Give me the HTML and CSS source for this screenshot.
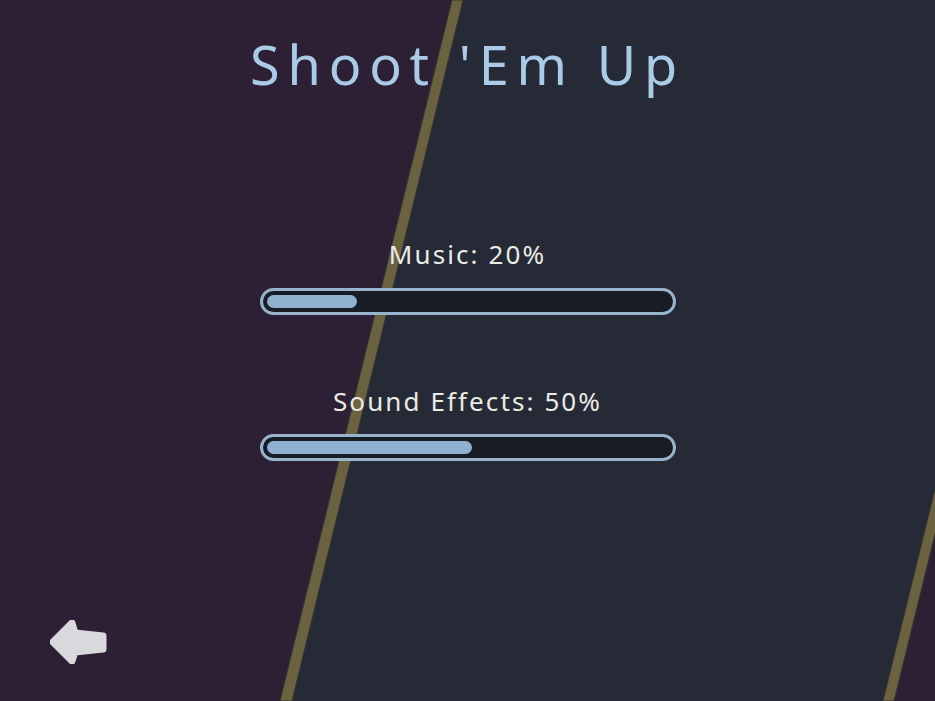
FILE: index.html
```
<!DOCTYPE html>
<html lang="en">
<head>
    <meta charset="UTF-8">
    <meta name="viewport" content="width=device-width, initial-scale=1.0">
    <title>Shoot 'Em Up - Options</title>
    <link rel="stylesheet" href="styles.css">
</head>
<body>
    <!-- Diagonal band backdrop -->
    <svg class="backdrop" viewBox="0 0 935 701" preserveAspectRatio="none">
        <rect width="935" height="701" fill="#2d2035"/>
        <polygon points="463,0 1055,0 883,701 292,701" fill="#252a36"/>
        <polygon points="452,0 463,0 292,701 280,701" fill="#6b6340" stroke="#3a3434" stroke-width="1"/>
        <polygon points="1055,0 1066,0 894,701 883,701" fill="#6b6340" stroke="#3a3434" stroke-width="1"/>
    </svg>

    <div class="container">
        <h1 class="title">Shoot 'Em Up</h1>

        <div class="setting">
            <div class="setting-label">Music: 20%</div>
            <div class="slider">
                <div class="slider-fill" style="width: 22.4%"></div>
            </div>
        </div>

        <div class="setting">
            <div class="setting-label">Sound Effects: 50%</div>
            <div class="slider">
                <div class="slider-fill" style="width: 51.2%"></div>
            </div>
        </div>
    </div>

    <!-- Back button -->
    <button class="back-button" aria-label="Back">
        <svg viewBox="0 0 58 44" width="58" height="44">
            <polygon points="3,22 22,3 25,13 53,16 53,29 25,32 22,41"
                     fill="#d9d8dc" stroke="#d9d8dc" stroke-width="7" stroke-linejoin="round"/>
        </svg>
    </button>
</body>
</html>
```

FILE: styles.css
```
/* Base styles */
body {
    margin: 0;
    padding: 0;
    width: 100vw;
    height: 100vh;
    overflow: hidden;
    font-family: 'Noto Sans', 'DejaVu Sans', sans-serif;
    color: #ebeae4;
    background-color: #2d2035;
    position: relative;
}

.backdrop {
    position: absolute;
    top: 0;
    left: 0;
    width: 100%;
    height: 100%;
    z-index: 0;
}

.container {
    position: relative;
    z-index: 1;
    display: flex;
    flex-direction: column;
    align-items: center;
}

/* Title */
.title {
    margin: 32px 0 0;
    font-size: 54px;
    font-weight: 400;
    letter-spacing: 7.8px;
    color: #a9cbe8;
    line-height: 1.2;
}

/* Volume settings */
.setting {
    display: flex;
    flex-direction: column;
    align-items: center;
    margin-top: 141px;
}

.setting + .setting {
    margin-top: 70px;
}

.setting-label {
    font-size: 26px;
    letter-spacing: 2.1px;
    line-height: 1.3;
    margin-bottom: 16px;
}

.slider {
    width: 416px;
    height: 27px;
    box-sizing: border-box;
    border: 3px solid #98b3cc;
    border-radius: 14px;
    background-color: #171c25;
    padding: 4px;
}

.slider-fill {
    height: 100%;
    border-radius: 7px;
    background-color: #8fb0cf;
}

/* Back arrow */
.back-button {
    position: absolute;
    left: 50px;
    top: 620px;
    z-index: 1;
    padding: 0;
    border: none;
    background: none;
    cursor: pointer;
}

.back-button svg {
    display: block;
}
```
